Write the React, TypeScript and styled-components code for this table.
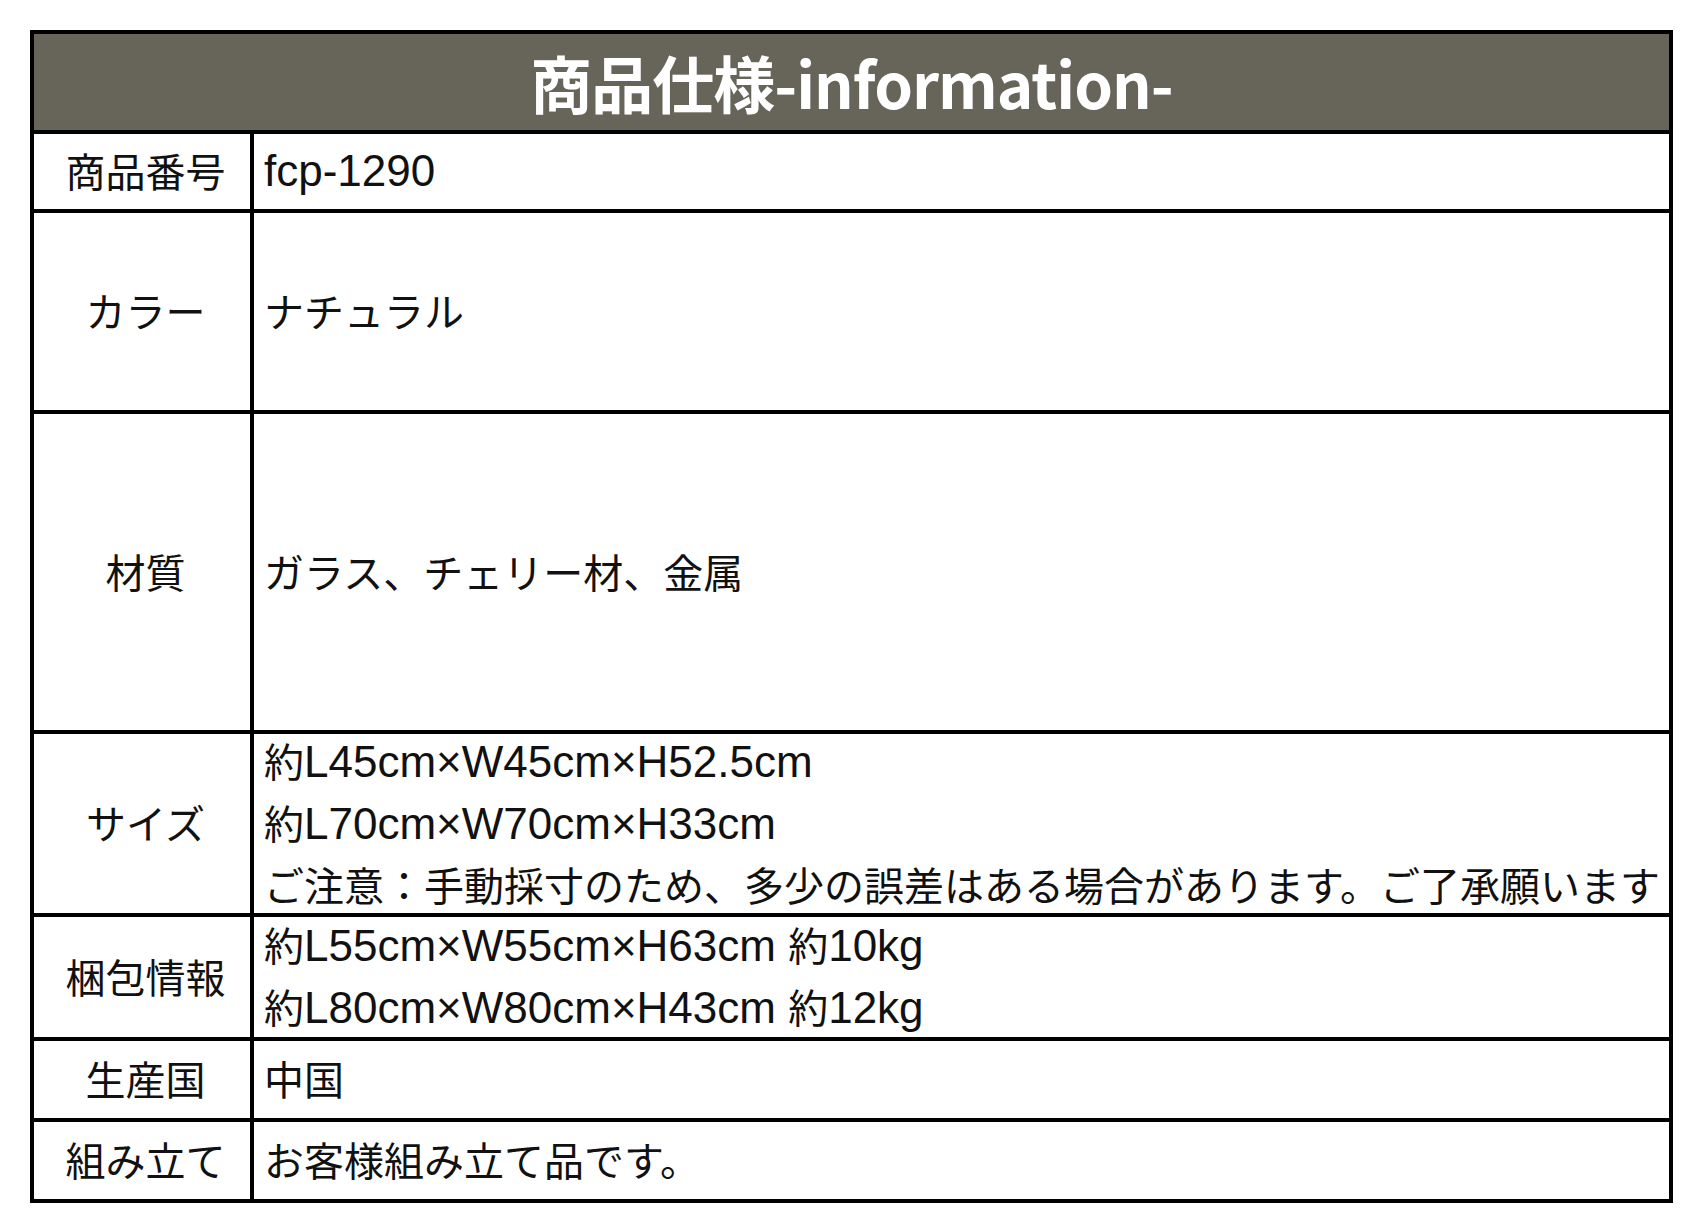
import { Fragment } from 'react';
import styled, { createGlobalStyle } from 'styled-components';

const GlobalStyle = createGlobalStyle`
  html, body {
    margin: 0;
    padding: 0;
    background: #ffffff;
  }
  body {
    font-family: "Noto Sans CJK JP", "Liberation Sans", sans-serif;
    color: #111111;
  }
`;

const Page = styled.div`
  padding: 30px;
`;

const SpecTable = styled.div`
  display: grid;
  grid-template-columns: 216px 1415px;
  grid-template-rows: 96px 75px 197px 316px 179px 120px 77px 77px;
  gap: 4px;
  padding: 4px;
  width: max-content;
  background: #000000;
`;

const Title = styled.h1`
  grid-column: 1 / -1;
  margin: 0;
  display: flex;
  align-items: center;
  justify-content: center;
  background: #67645a;
  color: #ffffff;
  font-family: "Noto Sans CJK JP", "Liberation Sans", sans-serif;
  font-weight: 700;
  font-size: 62px;
  letter-spacing: -1px;
`;

const Label = styled.div`
  display: flex;
  align-items: center;
  justify-content: center;
  padding: 0 0 3px 7px;
  background: #ffffff;
  font-size: 40px;
  white-space: nowrap;
`;

const Value = styled.div`
  display: flex;
  flex-direction: column;
  justify-content: center;
  padding: 0 0 3px 10px;
  background: #ffffff;
  font-size: 40px;
  line-height: 60px;
  white-space: nowrap;
`;

// latin runs are set a touch larger, like the Japanese font's own latin glyphs
const Latin = styled.span`
  font-family: "Liberation Sans", sans-serif;
  font-size: 44px;
`;

const Line = ({ text }: { text: string }) => (
  <span>
    {text.split(/([\x20-\x7e×]+)/).map((part, i) =>
      /^[\x20-\x7e×]+$/.test(part) ? <Latin key={i}>{part}</Latin> : part,
    )}
  </span>
);

const rows: { label: string; lines: string[] }[] = [
  { label: '商品番号', lines: ['fcp-1290'] },
  { label: 'カラー', lines: ['ナチュラル'] },
  { label: '材質', lines: ['ガラス、チェリー材、金属'] },
  {
    label: 'サイズ',
    lines: [
      '約L45cm×W45cm×H52.5cm',
      '約L70cm×W70cm×H33cm',
      'ご注意：手動採寸のため、多少の誤差はある場合があります。ご了承願います',
    ],
  },
  {
    label: '梱包情報',
    lines: ['約L55cm×W55cm×H63cm 約10kg', '約L80cm×W80cm×H43cm 約12kg'],
  },
  { label: '生産国', lines: ['中国'] },
  { label: '組み立て', lines: ['お客様組み立て品です。'] },
];

export default function App() {
  return (
    <>
      <GlobalStyle />
      <Page>
        <SpecTable>
          <Title>商品仕様-information-</Title>
          {rows.map(row => (
            <Fragment key={row.label}>
              <Label>{row.label}</Label>
              <Value>
                {row.lines.map(line => (
                  <Line key={line} text={line} />
                ))}
              </Value>
            </Fragment>
          ))}
        </SpecTable>
      </Page>
    </>
  );
}
